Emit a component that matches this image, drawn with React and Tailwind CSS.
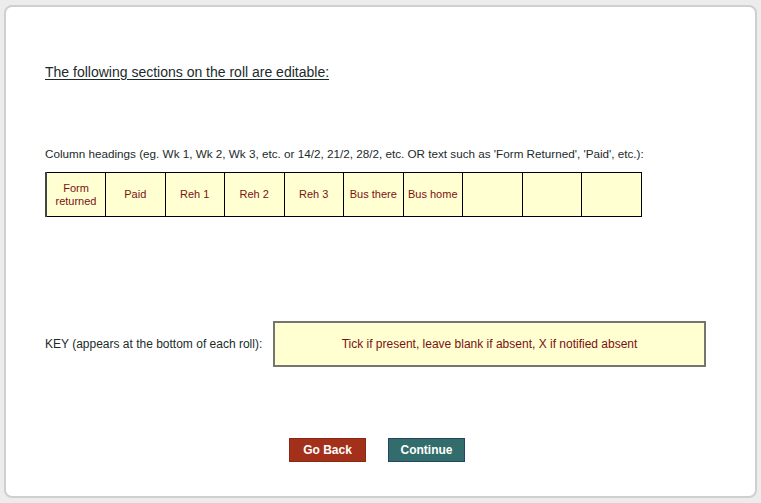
import React from 'react'

const HEADINGS = ['Form returned', 'Paid', 'Reh 1', 'Reh 2', 'Reh 3', 'Bus there', 'Bus home', '', '', '']

function HeadingCell({ label }) {
  return (
    <td className="h-[44px] w-[59.5px] border border-black bg-[#ffffd1] px-1 text-center align-middle text-[11px] leading-[13px] text-[#7b1111]">
      {label}
    </td>
  )
}

export default function App() {
  return (
    <div
      className="h-[503px] w-[761px] bg-[#ececec] px-[4px] pb-[5px] pt-[5px]"
      style={{ fontFamily: '"Liberation Sans", Arial, sans-serif' }}
    >
      <div className="flex h-full flex-col rounded-lg border-2 border-[#cfcfcf] bg-white pl-[39px]">
        {/* Intro */}
        <p className="mt-[57px] text-[14px] leading-[17px] text-[#1b2b2b] underline underline-offset-2">
          The following sections on the roll are editable:
        </p>

        {/* Column headings */}
        <p className="mt-[66px] text-[11.7px] leading-[14px] text-[#1b2b2b]">
          Column headings (eg. Wk 1, Wk 2, Wk 3, etc. or 14/2, 21/2, 28/2, etc. OR text such as 'Form Returned', 'Paid', etc.):
        </p>
        <table className="mt-[11px] w-[595px] table-fixed border-collapse border-l-2 border-l-[#444]">
          <tbody>
            <tr>
              {HEADINGS.map((h, i) => (
                <HeadingCell key={i} label={h} />
              ))}
            </tr>
          </tbody>
        </table>

        {/* Key */}
        <div className="mt-[104px] flex items-center">
          <span className="w-[228px] shrink-0 text-[12px] leading-[14px] text-[#1b2b2b]">
            KEY (appears at the bottom of each roll):
          </span>
          <div className="flex h-[46px] w-[433px] items-center justify-center border-2 border-[#76766c] bg-[#ffffd1] text-[12px] text-[#7b1111]">
            Tick if present, leave blank if absent, X if notified absent
          </div>
        </div>

        {/* Actions */}
        <div className="mt-[71px] flex justify-center gap-[22px] pr-[46px]">
          <button
            type="button"
            className="h-[24px] w-[77px] border border-[#8c2712] bg-[#a3301b] text-[12px] font-bold text-white"
          >
            Go Back
          </button>
          <button
            type="button"
            className="h-[24px] w-[77px] border border-[#23456a] bg-[#326d6c] text-[12px] font-bold text-white"
          >
            Continue
          </button>
        </div>
      </div>
    </div>
  )
}
